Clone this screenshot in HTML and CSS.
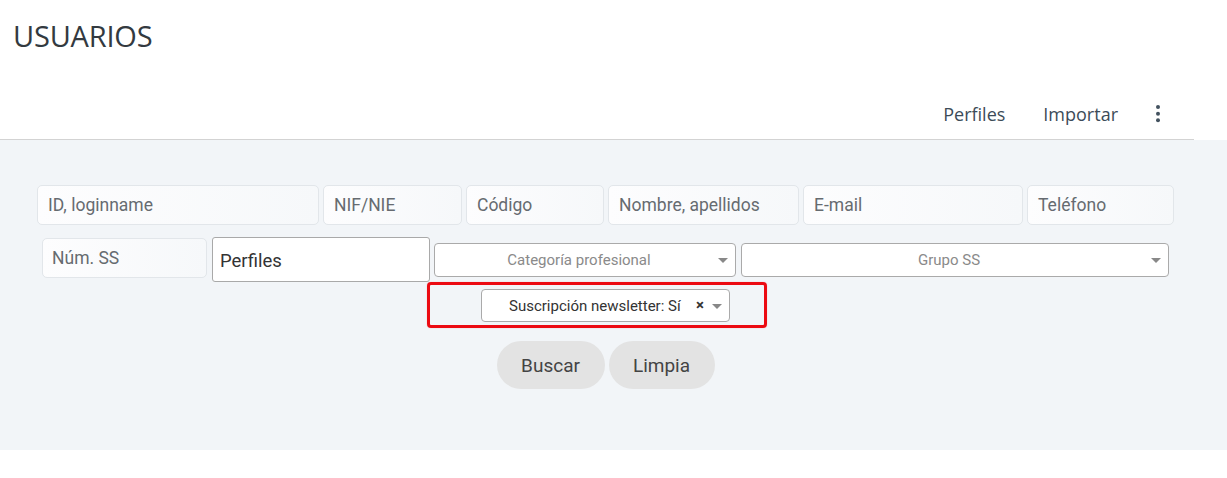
FILE: index.html
```html
<!DOCTYPE html>
<html lang="es">
<head>
<meta charset="utf-8">
<title>Usuarios</title>
<link rel="stylesheet" href="styles.css">
</head>
<body>
<div class="page">
  <header class="top">
    <h1 class="title">USUARIOS</h1>
    <nav class="tabs">
      <a class="tab">Perfiles</a>
      <a class="tab">Importar</a>
      <span class="more">
        <svg width="4" height="18" viewBox="0 0 4 18"><circle cx="2" cy="2" r="2"/><circle cx="2" cy="8.7" r="2"/><circle cx="2" cy="15.3" r="2"/></svg>
      </span>
    </nav>
  </header>
  <section class="panel">
    <div class="inner">
      <div class="row row1">
        <div class="field w-id">ID, loginname</div>
        <div class="field w-nif">NIF/NIE</div>
        <div class="field w-cod">Código</div>
        <div class="field w-nom">Nombre, apellidos</div>
        <div class="field w-mail">E-mail</div>
        <div class="field w-tel">Teléfono</div>
      </div>
      <div class="row row2">
        <div class="field field2 w-ss">Núm. SS</div>
        <div class="perfiles">Perfiles</div>
        <div class="select w-cat"><span class="sel-text">Categoría profesional</span><span class="arrow"></span></div>
        <div class="select w-grp"><span class="sel-text">Grupo SS</span><span class="arrow"></span></div>
      </div>
      <div class="row row3">
        <div class="nl-wrap">
          <div class="select nl"><span class="nl-text">Suscripción newsletter: Sí</span><span class="clear">×</span><span class="arrow"></span></div>
          <div class="highlight"></div>
        </div>
      </div>
      <div class="row actions">
        <button class="btn w-buscar">Buscar</button>
        <button class="btn w-limpia">Limpia</button>
      </div>
    </div>
  </section>
</div>
</body>
</html>
```
FILE: styles.css
```css
html, body {
  margin: 0;
  padding: 0;
  background: #ffffff;
}

.page {
  width: 1227px;
}

.top {
  width: 1194px;
  height: 139px;
  border-bottom: 1px solid #d3d3d3;
  display: flex;
  flex-direction: column;
  box-sizing: content-box;
}

.title {
  margin: 16px 0 0 13px;
  font-family: "Open Sans", sans-serif;
  font-weight: 400;
  font-size: 29px;
  line-height: 40px;
  color: #333a40;
  letter-spacing: -0.2px;
}

.tabs {
  margin-top: 43px;
  height: 30px;
  display: flex;
  justify-content: flex-end;
  align-items: center;
  padding-right: 34px;
  font-family: "Open Sans", sans-serif;
  font-size: 18px;
  line-height: 30px;
  color: #3c4b58;
}

.tab {
  margin-right: 38px;
}

.more {
  width: 4px;
  height: 18px;
  display: flex;
  margin-top: 0px;
}

.more svg {
  fill: #43525f;
}

.panel {
  background: #f2f5f8;
  height: 310px;
  box-sizing: border-box;
  padding-top: 45px;
}

.inner {
  width: 1211px;
}

.row {
  display: flex;
  justify-content: center;
}

.row1 {
  gap: 4px;
  height: 40px;
}

.field {
  height: 40px;
  box-sizing: border-box;
  border: 1px solid #e2e6ea;
  border-radius: 5px;
  background: linear-gradient(to right, #fdfdfe, #f6f8fa);
  font-family: Roboto, sans-serif;
  font-size: 17.5px;
  color: #666b70;
  padding-left: 10px;
  display: flex;
  align-items: center;
}

.w-id { width: 282px; }
.w-nif { width: 139px; }
.w-cod { width: 138px; }
.w-nom { width: 191px; }
.w-mail { width: 220px; }
.w-tel { width: 147px; }

.row2 {
  margin-top: 12px;
  align-items: flex-start;
  gap: 4px;
}

.field2 {
  margin-top: 1px;
  padding-left: 9px;
}

.w-ss { width: 165px; margin-right: 1px; }

.perfiles {
  width: 218px;
  height: 45px;
  box-sizing: border-box;
  border: 1px solid #a9a9a9;
  border-radius: 3px;
  background: #ffffff;
  font-family: Roboto, sans-serif;
  font-size: 18.5px;
  color: #333333;
  padding-left: 7px;
  display: flex;
  align-items: center;
  padding-top: 2px;
}

.select {
  position: relative;
  height: 34px;
  box-sizing: border-box;
  border: 1px solid #aaaaaa;
  border-radius: 4px;
  background: #ffffff;
  font-family: Roboto, sans-serif;
  font-size: 15px;
  display: flex;
  align-items: center;
}

.w-cat { width: 302px; margin-top: 6px; }
.w-grp { width: 428px; margin-top: 6px; margin-left: 1px; }

.sel-text {
  flex: 1;
  text-align: center;
  color: #8a8a8a;
  padding-left: 8px;
  padding-right: 20px;
}

.arrow {
  position: absolute;
  right: 7px;
  top: 14px;
  width: 0;
  height: 0;
  border-left: 5px solid transparent;
  border-right: 5px solid transparent;
  border-top: 5px solid #888888;
}

.row3 {
  margin-top: 7px;
}

.nl-wrap {
  position: relative;
}

.nl {
  width: 249px;
  height: 33px;
}

.nl-text {
  padding-left: 27px;
  color: #333333;
}

.clear {
  position: absolute;
  left: 214px;
  top: 6px;
  font-size: 15px;
  font-weight: 700;
  color: #333333;
}

.highlight {
  position: absolute;
  left: -54px;
  top: -7px;
  width: 340px;
  height: 46px;
  box-sizing: border-box;
  border: 3px solid #ec0a12;
  border-radius: 4px;
  box-shadow: 0 0 1px rgba(200, 0, 0, 0.4);
}

.actions {
  margin-top: 19px;
  gap: 4px;
}

.btn {
  height: 48px;
  border: none;
  border-radius: 24px;
  background: #e3e3e3;
  font-family: Roboto, sans-serif;
  font-size: 19px;
  color: #444444;
  padding: 0;
}

.w-buscar { width: 108px; }
.w-limpia { width: 106px; }
```
